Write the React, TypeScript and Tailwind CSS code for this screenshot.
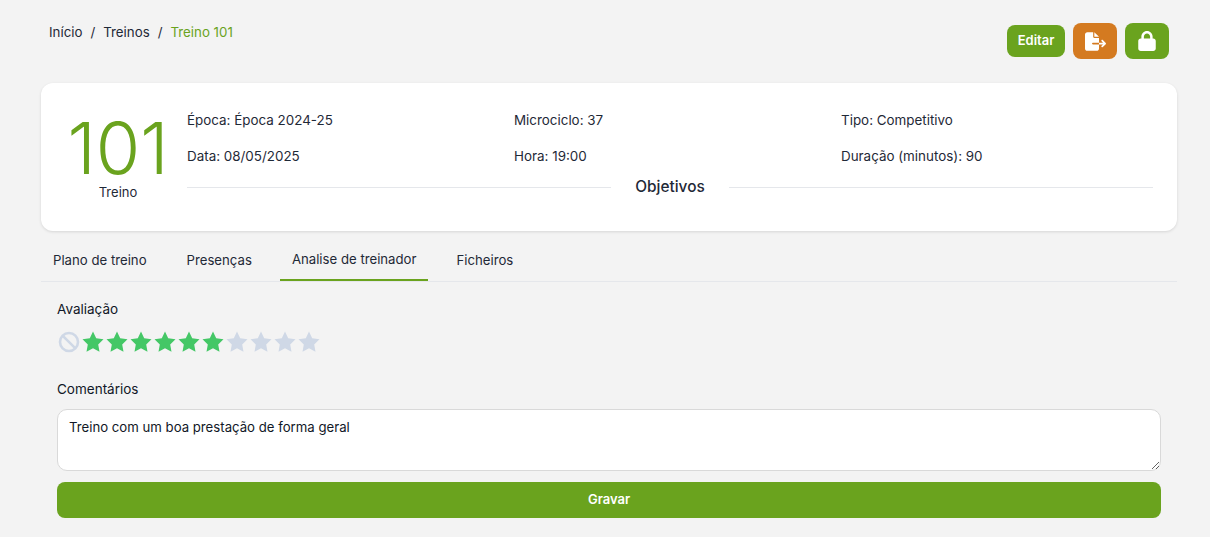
import { FaFileExport, FaLock } from "react-icons/fa6";

function Field({ label, value }: { label: string; value: string }) {
  return (
    <div className="text-[13.4px] leading-[20px] text-[#1f2937]">
      <span>{label}:</span> {value}
    </div>
  );
}

function Star({ on }: { on: boolean }) {
  return (
    <svg viewBox="0 0 24 24" className={on ? "h-6 w-6 fill-[#44c766]" : "h-6 w-6 fill-[#cfd8e6]"}>
      <path d="M12 1.6l3.2 6.7 7.3 1-5.3 5.1 1.3 7.3L12 18.2l-6.5 3.5 1.3-7.3L1.5 9.3l7.3-1z" strokeLinejoin="round" />
    </svg>
  );
}

const tabs = ["Plano de treino", "Presenças", "Analise de treinador", "Ficheiros"];

export default function App() {
  return (
    <div className="min-h-[537px] overflow-hidden bg-[#f3f3f3] font-['Inter','Noto_Sans',sans-serif] text-[14px] text-[#111827]">
      <div className="flex items-start justify-between pl-[49px] pr-[41px] pt-[23px]">
        <div className="flex h-[20px] items-center gap-[8px] text-[13.3px] text-[#1f2937]">
          <span>Início</span>
          <span>/</span>
          <span>Treinos</span>
          <span>/</span>
          <span className="text-[#6aa31e]">Treino 101</span>
        </div>
        <div className="flex items-center gap-2">
          <button className="h-[32px] w-[58px] rounded-lg bg-[#6aa31e] text-[13px] font-semibold text-white">Editar</button>
          <button className="flex h-9 w-11 items-center justify-center rounded-lg bg-[#d47a20] text-white">
            <FaFileExport className="h-[19px] w-[21px]" />
          </button>
          <button className="flex h-9 w-11 items-center justify-center rounded-lg bg-[#6aa31e] text-white">
            <FaLock className="h-5 w-5" />
          </button>
        </div>
      </div>

      <div className="ml-[41px] mr-[33px] mt-[24px] flex h-[148px] rounded-xl bg-white pl-[24px] pr-[24px] pt-[24px] shadow-[0_1px_3px_rgba(0,0,0,0.12)]">
        <div className="flex w-[106px] flex-col items-center">
          <div className="mt-[5px] text-[72px] font-light leading-[72px] text-[#6aa31e]">101</div>
          <div className="text-[13px] leading-[16px] text-[#1f2937]">Treino</div>
        </div>
        <div className="ml-[16px] flex-1">
          <div className="grid grid-cols-3 gap-x-[15px] gap-y-[16px] pt-[3px]">
            <Field label="Época" value="Época 2024-25" />
            <Field label="Microciclo" value="37" />
            <Field label="Tipo" value="Competitivo" />
            <Field label="Data" value="08/05/2025" />
            <Field label="Hora" value="19:00" />
            <Field label="Duração (minutos)" value="90" />
          </div>
          <div className="mt-[9px] flex items-center gap-[24px]">
            <div className="h-px flex-1 bg-[#e5e7eb]" />
            <span className="text-[15.4px] font-medium leading-[24px] text-[#1f2937]">Objetivos</span>
            <div className="h-px flex-1 bg-[#e5e7eb]" />
          </div>
        </div>
      </div>

      <div className="ml-[41px] mr-[33px] mt-[9px] flex gap-[16px] border-b border-[#e5e7eb]">
        {tabs.map((t) => (
          <div
            key={t}
            className={
              t === "Analise de treinador"
                ? "-mb-px flex h-[41px] items-center border-b-2 border-[#6aa31e] px-3 text-[13.2px] text-[#1f2937]"
                : "flex h-[41px] items-center px-3 text-[13.2px] text-[#1f2937]"
            }
          >
            {t}
          </div>
        ))}
      </div>

      <div className="mx-[57px] mt-[17px] w-[1104px]">
        <div className="text-[13.5px] leading-[20px]">Avaliação</div>
        <div className="mt-[11px] flex items-center">
          <svg viewBox="0 0 24 24" className="h-6 w-6 fill-none stroke-[#cfd8e6] stroke-[2.6]">
            <circle cx="12" cy="12" r="9" />
            <path d="M5.8 5.8l12.4 12.4" />
          </svg>
          {Array.from({ length: 10 }, (_, i) => (
            <Star key={i} on={i < 6} />
          ))}
        </div>
        <div className="mt-[25px] text-[13.5px] leading-[20px]">Comentários</div>
        <textarea
          readOnly
          value="Treino com um boa prestação de forma geral"
          className="mt-[10px] block h-[62px] w-full rounded-[10px] border border-[#d9d9d9] bg-white px-[11px] py-[7px] text-[13.2px] leading-[20px] text-[#111827] outline-none"
        />
        <button className="mt-[11px] block h-[36px] w-full rounded-lg bg-[#6aa31e] text-[13px] font-semibold text-white">
          Gravar
        </button>
      </div>
    </div>
  );
}
